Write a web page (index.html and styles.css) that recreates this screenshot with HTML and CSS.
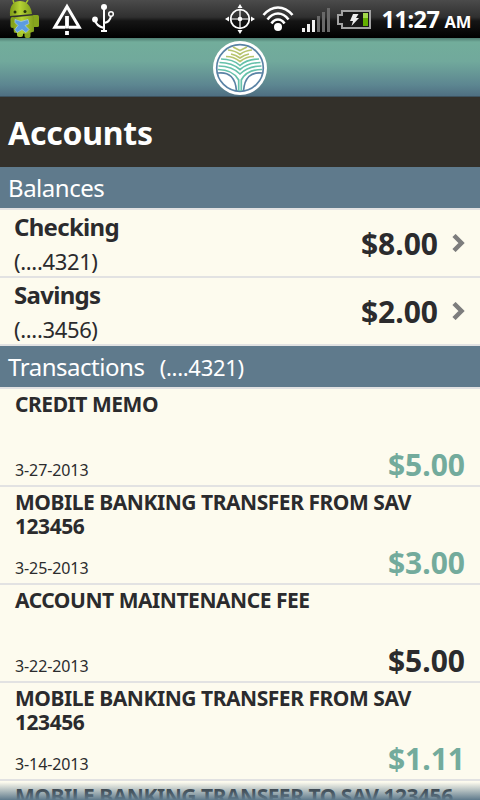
FILE: index.html
```html
<!DOCTYPE html>
<html lang="en">
<head>
  <meta charset="UTF-8">
  <meta name="viewport" content="width=device-width, initial-scale=1.0">
  <title>Accounts</title>
  <link rel="stylesheet" href="styles.css">
</head>
<body>
  <div class="screen">
    <div class="status-bar">
      <svg class="status-icons" width="380" height="38" viewBox="0 0 380 38">
        <defs>
          <linearGradient id="droid" x1="0" x2="1" y1="0" y2="0">
            <stop offset="0" stop-color="#7d9a16"/>
            <stop offset=".45" stop-color="#b5d334"/>
            <stop offset="1" stop-color="#7f9d1c"/>
          </linearGradient>
        </defs>
        <!-- robot -->
        <path d="M14 3l-1-3M26 3l2-3" stroke="#a3c22c" stroke-width="1.500"/>
        <rect x="10.500" y="17" width="4" height="11" rx="2" fill="#86a51d"/>
        <rect x="32" y="15" width="7" height="12" rx="1.500" fill="#86a51d"/>
        <rect x="17" y="29" width="6" height="8" rx="2" fill="#a3c22c"/>
        <rect x="24.500" y="29" width="6" height="9" rx="2" fill="#8aa820"/>
        <path d="M10 16C9 5 14 1 20 1s11 4 12 13z" fill="url(#droid)"/>
        <path d="M12 17.500l20-2 2 1v15q-9 4-20 1z" fill="url(#droid)"/>
        <circle cx="15" cy="12" r="1.500" fill="#26330c"/>
        <circle cx="25" cy="11.500" r="1.500" fill="#26330c"/>
        <path d="M15 19.500l6 2 7-2 1 4-4 2 4 4-3 3-4-3-5 3-2-3 3-4-3-3z" fill="#5c9ce0" stroke="#a9cdf0" stroke-width=".7"/>
        <!-- warning -->
        <path d="M65 27.300H54.800L67 6.500 79.200 27.300H69" fill="none" stroke="#fff" stroke-width="3"/>
        <path d="M67 16v12.500M67 31v4" stroke="#fff" stroke-width="3.800"/>
        <!-- usb -->
        <g fill="none" stroke="#fff" stroke-width="2">
          <path d="M104 6v24M95 20q1 6 9 8M111 16q-1 6-7 7"/>
          <circle cx="111" cy="14" r="2.300" stroke-width="1.500"/>
        </g>
        <circle cx="104" cy="7" r="3" fill="#fff"/>
        <circle cx="95" cy="19.500" r="2.900" fill="#fff"/>
        <path d="M101 30h6v2h-6z" fill="#fff"/>
        <!-- gps -->
        <circle cx="240" cy="19" r="9.300" fill="none" stroke="#fff" stroke-width="1.800"/>
        <path d="M240 9v20M230 19h20" stroke="#fff" stroke-width="1.200"/>
        <circle cx="240" cy="19" r="2.300" fill="#fff"/>
        <path d="M237.500 8L240 4l2.500 4zM237.500 30l2.500 4 2.500-4zM229 16.500L225 19l4 2.500zM251 16.500l4 2.500-4 2.500z" fill="#fff"/>
        <!-- wifi -->
        <g fill="none" stroke="#fff" stroke-width="2.600">
          <path d="M263.500 15Q270 7.500 278 7.500t14.500 7.500"/>
          <path d="M267.500 19.500Q272 13.500 278 13.500t10.500 6"/>
          <path d="M271.500 23.500Q274 19.500 278 19.500t6.500 4"/>
        </g>
        <circle cx="278" cy="27" r="4" fill="#fff"/>
        <!-- signal -->
        <path d="M302 28h3v4h-3zM307 24h3v8h-3zM312 20h3v12h-3z" fill="#f2f2f2"/>
        <path d="M317 16h3v16h-3zM322 12h3v20h-3zM327 8h3v24h-3z" fill="#696969"/>
        <!-- battery -->
        <path d="M342 11h28v17h-28v-4h-4v-9h4z" fill="#181818" stroke="#a2a2a2" stroke-width="2"/>
        <path d="M363 13h5v13h-5z" fill="#63b000"/>
        <path d="M363 13h5v5h-5z" fill="#a3d84c"/>
        <path d="M353 14h5.500l-2.500 4h3l-7.500 8 1.500-5h-3z" fill="#eee"/>
      </svg>
      <div class="clock">11:27<span class="meridiem">AM</span></div>
    </div>

    <div class="brand-bar">
      <svg class="logo" width="54" height="54" viewBox="0 0 54 54">
        <circle cx="27" cy="27" r="27" fill="#fff"/>
        <circle cx="27" cy="27" r="23.300" fill="none" stroke="#5a83a5" stroke-width="1.700"/>
        <g fill="none" stroke-width="1.700">
          <g stroke="#b7c46d">
            <path d="M20 6l7 3.500L34 6"/>
            <path d="M15 9q7 .5 12 4.500Q32 9.500 39 9"/>
            <path d="M18 13q5 1 9 4 4-3 9-4"/>
            <path d="M13 15.500q8 0 14 5 6-5 14-5"/>
          </g>
          <g stroke="#66c1aa">
            <path d="M8 18q12 0 19 6.500Q34 18 46 18"/>
            <path d="M6.500 21.500Q19 21.500 27 28.500q8-7 20.500-7"/>
            <path d="M5.500 25Q19 25 27 33q8-8 21.500-8"/>
            <path d="M25.700 50V39Q20 28.500 5 28.500M28.300 50V39Q34 28.500 49 28.500"/>
          </g>
          <path d="M5 32q17-2 18.500 18M49 32q-17-2-18.500 18" stroke="#5a83a5"/>
        </g>
      </svg>
    </div>

    <h1 class="page-title">Accounts</h1>

    <h2 class="section-title">Balances</h2>
    <div class="account">
      <div class="account-info">
        <div class="account-name">Checking</div>
        <div class="account-number">(....4321)</div>
      </div>
      <div class="balance">$8.00</div>
      <svg class="chevron" width="13" height="18" viewBox="0 0 13 18"><path d="M2 1.500L9.500 9 2 16.500" fill="none" stroke="#7d7d7d" stroke-width="4.500"/></svg>
    </div>
    <div class="account">
      <div class="account-info">
        <div class="account-name">Savings</div>
        <div class="account-number">(....3456)</div>
      </div>
      <div class="balance">$2.00</div>
      <svg class="chevron" width="13" height="18" viewBox="0 0 13 18"><path d="M2 1.500L9.500 9 2 16.500" fill="none" stroke="#7d7d7d" stroke-width="4.500"/></svg>
    </div>

    <h2 class="section-title">Transactions <span class="section-number">(....4321)</span></h2>
    <div class="transaction">
      <div class="description">CREDIT MEMO</div>
      <div class="details"><span class="date">3-27-2013</span><span class="amount credit">$5.00</span></div>
    </div>
    <div class="transaction">
      <div class="description">MOBILE BANKING TRANSFER FROM SAV 123456</div>
      <div class="details"><span class="date">3-25-2013</span><span class="amount credit">$3.00</span></div>
    </div>
    <div class="transaction">
      <div class="description">ACCOUNT MAINTENANCE FEE</div>
      <div class="details"><span class="date">3-22-2013</span><span class="amount">$5.00</span></div>
    </div>
    <div class="transaction">
      <div class="description">MOBILE BANKING TRANSFER FROM SAV 123456</div>
      <div class="details"><span class="date">3-14-2013</span><span class="amount credit">$1.11</span></div>
    </div>
    <div class="transaction">
      <div class="description">MOBILE BANKING TRANSFER TO SAV 123456</div>
    </div>
    <div class="bottom-fade"></div>
  </div>
</body>
</html>
```
FILE: styles.css
```css
* {
  box-sizing: border-box;
}
body {
  margin: 0;
  font-family: "Noto Sans", "Open Sans", sans-serif;
  background: #fdfbee;
  color: #2b2b2d;
}
.screen {
  position: relative;
  width: 480px;
  height: 800px;
  overflow: hidden;
}
.status-bar {
  display: flex;
  justify-content: space-between;
  height: 38px;
  background: linear-gradient(#4b4b4b, #303030 45%, #151515 55%, #000);
  color: #fff;
}
.clock {
  padding-right: 9px;
  font-size: 23.5px;
  line-height: 39px;
  font-weight: bold;
  letter-spacing: -0.5px;
  white-space: nowrap;
}
.meridiem {
  margin-left: 5px;
  font-size: 16.5px;
  letter-spacing: -0.2px;
}
.brand-bar {
  display: flex;
  justify-content: center;
  height: 59px;
  padding-top: 3px;
  background: linear-gradient(#4f7d72, #72ad9b 4px, #71a99c 40%, #5d8791 80%, #4f6f82);
  border-bottom: 1px solid #3d5360;
}
.page-title {
  height: 70px;
  margin: 0;
  padding-left: 8px;
  background: #33302a;
  color: #fff;
  font-size: 32px;
  line-height: 72px;
  letter-spacing: -0.25px;
}
.section-title {
  height: 43px;
  margin: 0;
  padding-left: 8px;
  background: #5f7a8c;
  border-bottom: 2px solid #e2e2e2;
  color: #fff;
  font-size: 24px;
  font-weight: normal;
  line-height: 42px;
  letter-spacing: -0.47px;
  white-space: nowrap;
}
.section-number {
  margin-left: 9.5px;
  font-size: 22px;
  letter-spacing: -0.3px;
}
.account {
  display: flex;
  align-items: center;
  height: 68px;
  padding: 0 15px 0 14px;
  border-bottom: 2px solid #e2e2e2;
}
.account-info {
  flex: 1;
  padding-top: 2px;
}
.account-name {
  font-size: 24px;
  line-height: 34px;
  font-weight: bold;
  letter-spacing: -0.7px;
}
.account-number {
  font-size: 22px;
  line-height: 34px;
  letter-spacing: -0.35px;
}
.balance {
  font-size: 30px;
  font-weight: bold;
}
.chevron {
  margin-left: 14px;
}
.transaction {
  display: flex;
  flex-direction: column;
  justify-content: space-between;
  height: 98px;
  padding: 3px 15px 0;
  border-bottom: 2px solid #e2e2e2;
}
.description {
  font-size: 21px;
  line-height: 24px;
  font-weight: bold;
  letter-spacing: -0.46px;
}
.details {
  display: flex;
  justify-content: space-between;
  align-items: baseline;
  line-height: 30px;
}
.date {
  font-size: 16px;
  letter-spacing: -0.1px;
}
.amount {
  font-size: 30px;
  font-weight: bold;
}
.credit {
  color: #73ab9c;
}
.bottom-fade {
  position: absolute;
  left: 0;
  right: 0;
  bottom: 0;
  height: 18px;
  background: linear-gradient(rgba(95, 122, 140, 0), #5f7a8c);
}
```
